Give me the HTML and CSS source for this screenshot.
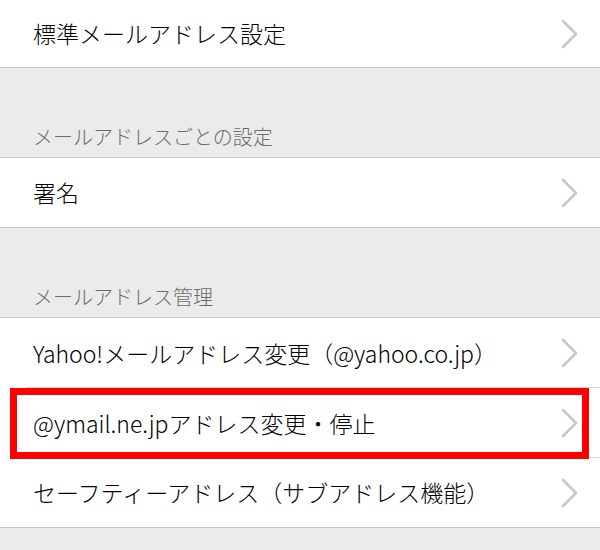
FILE: index.html
```html
<!DOCTYPE html>
<html lang="ja">
<head>
<meta charset="utf-8">
<link rel="stylesheet" href="styles.css">
</head>
<body>
<div class="list">
  <div class="row row-first">
    <span class="label">標準メールアドレス設定</span>
    <svg class="chev" viewBox="0 0 18 30" width="18" height="30"><polyline points="2,2 15,15 2,28"/></svg>
  </div>
  <div class="header"><span>メールアドレスごとの設定</span></div>
  <div class="row">
    <span class="label">署名</span>
    <svg class="chev" viewBox="0 0 18 30" width="18" height="30"><polyline points="2,2 15,15 2,28"/></svg>
  </div>
  <div class="header"><span>メールアドレス管理</span></div>
  <div class="group">
    <div class="row inset">
      <span class="label">Yahoo!メールアドレス変更（@yahoo.co.jp）</span>
      <svg class="chev" viewBox="0 0 18 30" width="18" height="30"><polyline points="2,2 15,15 2,28"/></svg>
    </div>
    <div class="row inset highlighted">
      <span class="label">@ymail.ne.jpアドレス変更・停止</span>
      <svg class="chev" viewBox="0 0 18 30" width="18" height="30"><polyline points="2,2 15,15 2,28"/></svg>
      <div class="mark"></div>
    </div>
    <div class="row">
      <span class="label">セーフティーアドレス（サブアドレス機能）</span>
      <svg class="chev" viewBox="0 0 18 30" width="18" height="30"><polyline points="2,2 15,15 2,28"/></svg>
    </div>
  </div>
</div>
</body>
</html>
```
FILE: styles.css
```css
html, body {
  margin: 0;
  padding: 0;
  background: #ebebeb;
}
body {
  font-family: "Noto Sans CJK JP", "Noto Sans", sans-serif;
  font-weight: 300;
  width: 600px;
  height: 550px;
  overflow: hidden;
}
.list {
  display: flex;
  flex-direction: column;
}
.row {
  position: relative;
  display: flex;
  align-items: center;
  justify-content: space-between;
  height: 69px;
  padding: 0 21px 0 33px;
  background: #fff;
  border-bottom: 1px solid #c8c8c8;
  box-sizing: content-box;
}
.row-first {
  height: 67px;
}
.row.inset {
  height: 70px;
  border-bottom: none;
}
.row.inset::after {
  content: "";
  position: absolute;
  left: 26px;
  right: 0;
  bottom: 0;
  height: 1px;
  background: #d6d6d6;
}
.label {
  font-size: 23px;
  color: #000;
  line-height: 1;
  white-space: nowrap;
}
.chev {
  flex: none;
}
.chev polyline {
  fill: none;
  stroke: #c7c7cc;
  stroke-width: 2.6;
  stroke-linecap: round;
  stroke-linejoin: round;
}
.header {
  height: 89px;
  display: flex;
  align-items: flex-end;
  padding: 0 33px;
  border-bottom: 1px solid #c8c8c8;
}
.header span {
  font-size: 20px;
  color: #6b6b6b;
  line-height: 1;
  padding-bottom: 10px;
}
.mark {
  position: absolute;
  left: 10px;
  right: 11px;
  top: 0;
  bottom: -1px;
  border: 7px solid #ff0000;
  z-index: 2;
}
```
